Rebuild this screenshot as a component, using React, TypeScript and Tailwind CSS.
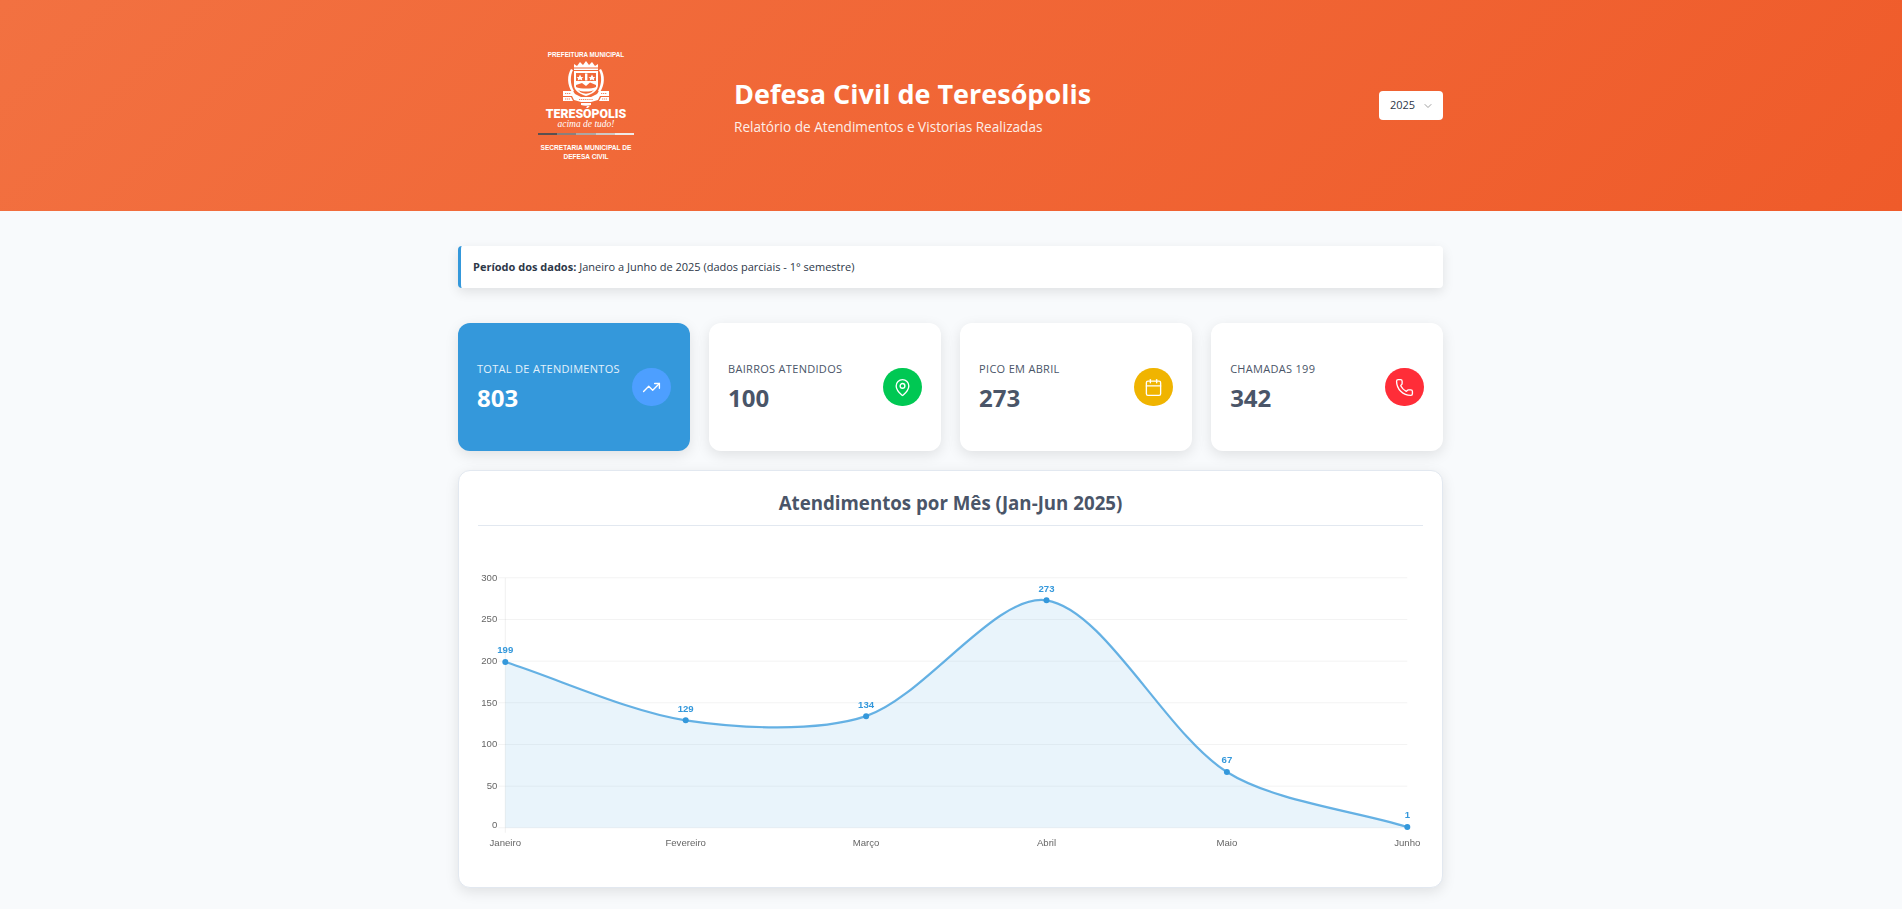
import { Calendar, ChevronDown, MapPin, Phone, TrendingUp } from "lucide-react";

const stats = [
  { label: "Total de Atendimentos", value: "803", icon: TrendingUp, circle: "bg-[#4d9fff]", featured: true },
  { label: "Bairros Atendidos", value: "100", icon: MapPin, circle: "bg-[#00c853]", featured: false },
  { label: "Pico em Abril", value: "273", icon: Calendar, circle: "bg-[#f0b400]", featured: false },
  { label: "Chamadas 199", value: "342", icon: Phone, circle: "bg-[#ff2d38]", featured: false },
];

const months = ["Janeiro", "Fevereiro", "Março", "Abril", "Maio", "Junho"];
const values = [199, 129, 134, 273, 67, 1];

// chart area inside the svg
const left = 27.3;
const step = 180.4;
const baseY = 267.8;
const pxPerUnit = 250 / 300;

const points = values.map((v, i) => ({ x: left + step * i, y: baseY - v * pxPerUnit }));

// same spline the chart lib uses
function buildLine() {
  const t = 0.3;
  const cps = points.map((p, i) => {
    const prev = points[i - 1] ?? p;
    const next = points[i + 1] ?? p;
    const d01 = Math.hypot(p.x - prev.x, p.y - prev.y);
    const d12 = Math.hypot(next.x - p.x, next.y - p.y);
    const total = d01 + d12 || 1;
    const dx = next.x - prev.x;
    const dy = next.y - prev.y;
    return {
      inX: p.x - (t * d01 * dx) / total,
      inY: p.y - (t * d01 * dy) / total,
      outX: p.x + (t * d12 * dx) / total,
      outY: p.y + (t * d12 * dy) / total,
    };
  });
  let d = `M${points[0].x} ${points[0].y}`;
  for (let i = 1; i < points.length; i++) {
    d += ` C${cps[i - 1].outX} ${cps[i - 1].outY} ${cps[i].inX} ${cps[i].inY} ${points[i].x} ${points[i].y}`;
  }
  return d;
}

function Crest() {
  return (
    <svg width="48" height="45" viewBox="0 0 48 45" className="block">
      {/* crown */}
      <path d="M12 9 L12 3 L15 5 L18 1 L21 4 L24 0 L27 4 L30 1 L33 5 L36 3 L36 9 Z" fill="#fff" />
      <rect x="12" y="6.5" width="24" height="1" fill="#f26a3a" />
      {/* leaves */}
      <path d="M9 8 C5 14 5 24 10 31 L12 30 C8 23 8 15 11 9 Z" fill="#fff" />
      <path d="M39 8 C43 14 43 24 38 31 L36 30 C40 23 40 15 37 9 Z" fill="#fff" />
      {/* shield */}
      <path d="M12 10 H36 V24 C36 30 30 33 24 35 C18 33 12 30 12 24 Z" fill="#fff" />
      <path d="M14 12 H34 V20 H14 Z" fill="#f26a3a" />
      <path d="M18 13.5 L19.2 16 L21.5 16.2 L19.8 17.6 L20.3 19.6 L18 18.5 L15.7 19.6 L16.2 17.6 L14.5 16.2 L16.8 16 Z" fill="#fff" />
      <path d="M30 13.5 L31.2 16 L33.5 16.2 L31.8 17.6 L32.3 19.6 L30 18.5 L27.7 19.6 L28.2 17.6 L26.5 16.2 L28.8 16 Z" fill="#fff" />
      <rect x="23" y="12.5" width="2.4" height="7" fill="#fff" />
      <path d="M14 24 L20 22 L24 25 L28 21.5 L34 24 V26 C30 28 18 28 14 26 Z" fill="#f26a3a" />
      <path d="M16 29 C20 31 28 31 32 29 L29 31.5 C26 33 22 33 19 31.5 Z" fill="#f26a3a" />
      {/* ribbons */}
      <path d="M1 30 H11 L13 33 L19 36 H29 L35 33 L37 30 H47 V35 H38 L36 39 L29 41 H19 L12 39 L10 35 H1 Z" fill="#fff" />
      <path d="M1 36 H9 L11 40 H1 Z" fill="#fff" />
      <path d="M47 36 H39 L37 40 H47 Z" fill="#fff" />
      <path d="M3 32.5 H9 M39 32.5 H45 M3 38 H8 M40 38 H45 M17 38.5 H31" stroke="#f26a3a" strokeWidth="0.8" strokeDasharray="1.2 0.7" />
      <path d="M19 42 H29 V44 C26 45 22 45 19 44 Z" fill="#fff" />
    </svg>
  );
}

function Logo() {
  return (
    <div className="flex w-[256px] flex-col items-center pt-[1px] text-white">
      <div className="text-[6.3px] font-bold leading-[8px] font-['Liberation_Sans',sans-serif]">PREFEITURA MUNICIPAL</div>
      <div className="mt-[2px]">
        <Crest />
      </div>
      <div className="mt-[1px] text-[12.3px] font-black leading-[14px] font-['Roboto',sans-serif]">TERESÓPOLIS</div>
      <div className="-mt-[2px] text-[9.5px] italic leading-[10px] font-['Liberation_Serif',serif]">acima de tudo!</div>
      <div className="mt-[4px] flex h-[2px] w-[96px]">
        <div className="flex-1 bg-[#5a5050]" />
        <div className="flex-1 bg-[#8a7f7c]" />
        <div className="flex-1 bg-[#ada6a3]" />
        <div className="flex-1 bg-[#cfc9c6]" />
        <div className="flex-1 bg-[#efeae8]" />
      </div>
      <div className="mt-[8px] text-center text-[6.6px] font-bold leading-[9px] font-['Liberation_Sans',sans-serif]">
        SECRETARIA MUNICIPAL DE
        <br />
        DEFESA CIVIL
      </div>
    </div>
  );
}

function StatCard({ label, value, icon: Icon, circle, featured }: (typeof stats)[number]) {
  return (
    <div
      className={`flex h-[128px] items-center justify-between rounded-xl px-[19px] shadow-[0_4px_14px_rgba(0,0,0,0.1)] ${
        featured ? "bg-[#3498db] text-white" : "bg-white text-[#4a5568]"
      }`}
    >
      <div>
        <div className={`text-[11px] uppercase leading-[18px] tracking-[0.3px] ${featured ? "text-[#e3f1fb]" : "text-[#4a5568]"}`}>{label}</div>
        <div className="mt-[3px] text-[24px] font-bold leading-[33px]">{value}</div>
      </div>
      <div className={`flex h-[38px] w-[39px] shrink-0 items-center justify-center rounded-full ${circle}`}>
        <Icon size={19} color="#fff" strokeWidth={1.7} />
      </div>
    </div>
  );
}

function AreaChart() {
  const line = buildLine();
  const last = points[points.length - 1];
  return (
    <svg width="945" height="300" viewBox="0 0 945 300" className="mt-[34px] block blur-[0.6px]">
      {[0, 50, 100, 150, 200, 250, 300].map((tick) => {
        const y = baseY - tick * pxPerUnit;
        return (
          <g key={tick}>
            <line x1={left - 7} x2={last.x} y1={y} y2={y} stroke="#000" strokeOpacity={0.05} />
            <text x={left - 8} y={tick === 0 ? y + 0.5 : y + 3} textAnchor="end" fontSize="9.6" fill="#666" fontFamily="Liberation Sans, sans-serif">
              {tick}
            </text>
          </g>
        );
      })}
      <line x1={left} x2={left} y1={baseY - 250} y2={baseY + 5} stroke="#000" strokeOpacity={0.06} />
      <path d={`${line} L${last.x} ${baseY} L${left} ${baseY} Z`} fill="#3498db" fillOpacity={0.11} />
      <path d={line} fill="none" stroke="#3498db" strokeWidth={2.2} strokeOpacity={0.75} />
      {points.map((p, i) => (
        <g key={months[i]}>
          <circle cx={p.x} cy={p.y} r={3} fill="#3498db" />
          <text x={p.x} y={p.y - 8.5} textAnchor="middle" fontSize="9.6" fontWeight="700" fill="#3498db" fontFamily="Liberation Sans, sans-serif">
            {values[i]}
          </text>
          <text x={p.x} y={285.5} textAnchor="middle" fontSize="9.6" fill="#666" fontFamily="Liberation Sans, sans-serif">
            {months[i]}
          </text>
        </g>
      ))}
    </svg>
  );
}

export default function App() {
  return (
    <div className="min-h-screen bg-[#f8fafc] font-['Open_Sans',sans-serif] text-[#2d3748]">
      <header className="flex h-[211px] items-center bg-[linear-gradient(135deg,#f27141,#ef5b2a)]">
        <div className="ml-[458px] flex w-[985px] items-center justify-between">
          <div className="flex items-center">
            <Logo />
            <div className="pl-[20px] text-white">
              <h1 className="text-[27px] font-bold leading-[36px]">Defesa Civil de Teresópolis</h1>
              <p className="mt-[5px] text-[13.6px] leading-[19px] text-[#fdeee8]">Relatório de Atendimentos e Vistorias Realizadas</p>
            </div>
          </div>
          <div className="flex h-[29px] w-[64px] items-center justify-between rounded bg-white pl-[11px] pr-[9px] text-[11px] text-[#2d3748]">
            2025
            <ChevronDown size={12} color="#a0a0a0" />
          </div>
        </div>
      </header>

      <main className="ml-[458px] w-[985px] pt-[35px]">
        <div className="flex h-[42px] items-center rounded border-l-[3px] border-[#3498db] bg-white pl-[12px] text-[11px] shadow-[0_4px_12px_rgba(0,0,0,0.1)]">
          <strong className="mr-[3px] font-bold">Período dos dados:</strong>
          Janeiro a Junho de 2025 (dados parciais - 1° semestre)
        </div>

        <section className="mt-[35px] grid grid-cols-4 gap-[19.2px]">
          {stats.map((s) => (
            <StatCard key={s.label} {...s} />
          ))}
        </section>

        <section className="mt-[19px] h-[418px] rounded-xl border border-[#e2e8f0] bg-white px-[19px] pt-[19px] shadow-[0_4px_14px_rgba(0,0,0,0.1)]">
          <h2 className="h-[36px] border-b border-[#e2e8f0] text-center text-[18.7px] font-bold leading-[26px] text-[#4a5568]">
            Atendimentos por Mês (Jan-Jun 2025)
          </h2>
          <AreaChart />
        </section>
      </main>
    </div>
  );
}
